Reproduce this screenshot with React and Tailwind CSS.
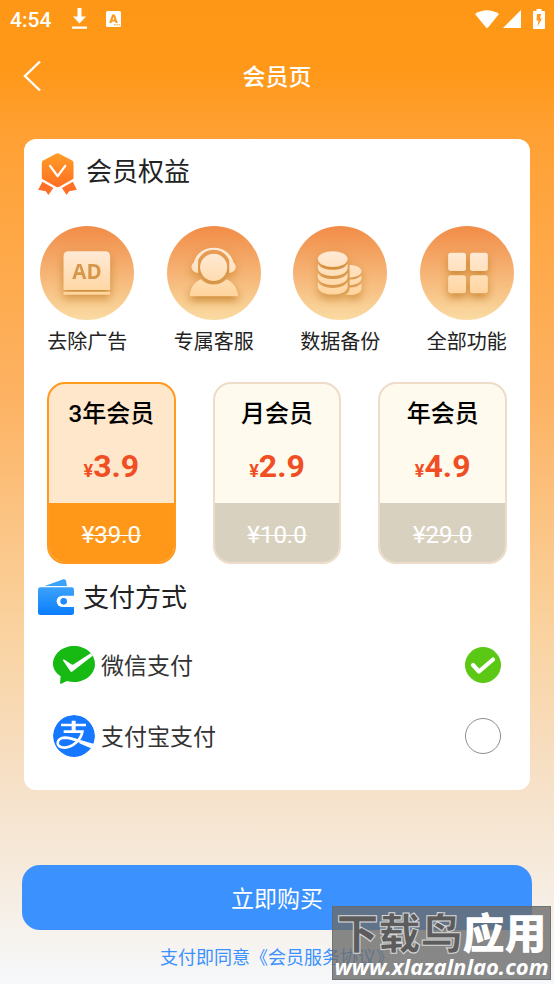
import { useState } from "react";

const plans = [
  { id: "three", name: "3年会员", price: "3.9", old: "¥39.0" },
  { id: "month", name: "月会员", price: "2.9", old: "¥10.0" },
  { id: "year", name: "年会员", price: "4.9", old: "¥29.0" },
];

function StatusBar() {
  return (
    <div className="flex h-[37px] items-center pr-[9px] pl-[10px] text-white">
      <span className="pt-[2px] text-[21px] leading-[24px] font-medium">4:54</span>
      <svg className="ml-[21px] h-[21px] w-[15px]" viewBox="0 0 15 21" fill="currentColor" aria-hidden="true">
        <path d="M5.5 0h4v8.5h4.5L7.5 15.500 1 8.500h4.500zM0 18.500h15v2.200H0z" />
      </svg>
      <svg className="ml-[19px] h-4 w-[15px]" viewBox="0 0 15 16" aria-hidden="true">
        <rect width="15" height="16" rx="1.500" fill="#fff" />
        <path d="M6.200 3.500h2.600l3 8.500H9.600l-.5-1.600H5.900L5.400 12H3.200zM7.500 6l-.9 2.800h1.800z" fill="#ff9818" fillRule="evenodd" />
        <path d="M8 13.300h1.500v1H8zM10.300 13.300h1.500v1h-1.500zM12.600 13.300h1.200v1h-1.200z" fill="#ff9818" />
      </svg>
      <span className="flex-1" />
      <svg className="h-[18px] w-6" viewBox="0 0 24 18" fill="currentColor" aria-hidden="true">
        <path d="M0 4Q12-3.500 24 4L13 17.500q-1 1-2 0z" />
      </svg>
      <svg className="ml-1 h-[18px] w-[18px]" viewBox="0 0 18 18" fill="currentColor" aria-hidden="true">
        <path d="M18 0v18H0z" />
      </svg>
      <svg className="ml-3 h-5 w-3" viewBox="0 0 12 20" aria-hidden="true">
        <path d="M3.500 0h5v2H11q1 0 1 1v16q0 1-1 1H1q-1 0-1-1V3q0-1 1-1h2.500z" fill="#fff" />
        <path d="M4 5h4L7 9.500h2L4.500 17.500 5.500 11.500H3.500z" fill="#ff9818" />
      </svg>
    </div>
  );
}

function Medal() {
  return (
    <svg className="h-[42px] w-[39px]" viewBox="54 69 117 127" aria-hidden="true">
      <defs>
        <linearGradient id="medal" x1="0" y1="0" x2="0" y2="1">
          <stop offset="0" stopColor="#ff9d28" />
          <stop offset="1" stopColor="#ff6f22" />
        </linearGradient>
      </defs>
      <path d="M108 71q5-3 10 0l39 21q4 2 4 7v43q0 5-4 7l-39 22q-5 3-10 0l-39-22q-4-2-4-7V99q0-5 4-7z" fill="url(#medal)" />
      <path d="M67 156l33 19-15 21-8-11-23-5zM159 156l-33 19 14 21 8-11 23-5z" fill="#ff7026" />
      <path d="M90 108l23 31 23-31" fill="none" stroke="#fff" strokeWidth="7" strokeLinecap="round" strokeLinejoin="round" />
    </svg>
  );
}

function Badge({ children }) {
  return (
    <svg className="h-[94px] w-[94px]" viewBox="0 0 284 284" aria-hidden="true">
      <defs>
        <linearGradient id="disc" x1="0" y1="0" x2="0" y2="1">
          <stop offset="0" stopColor="#f18c47" />
          <stop offset="1" stopColor="#fadba2" />
        </linearGradient>
        <linearGradient id="cream" gradientUnits="userSpaceOnUse" x1="0" y1="70" x2="0" y2="212">
          <stop offset="0" stopColor="#ffebd9" />
          <stop offset="1" stopColor="#ffd49c" />
        </linearGradient>
        <filter id="glow" x="-50%" y="-50%" width="200%" height="200%" colorInterpolationFilters="sRGB">
          <feDropShadow dx="0" dy="12" stdDeviation="13" floodColor="#cb8833" floodOpacity="1" />
        </filter>
      </defs>
      <circle cx="142" cy="142" r="142" fill="url(#disc)" />
      <g fill="url(#cream)" filter="url(#glow)">{children}</g>
    </svg>
  );
}

const benefits = [
  {
    name: "去除广告",
    art: (
      <>
        <path d="M71 193V92q0-16 16-16h109q16 0 16 16v101zM71 199h141v9H71z" />
        <text
          x="142"
          y="159"
          textAnchor="middle"
          fontSize="62"
          fill="#d6974a"
          className="font-['Open_Sans',sans-serif] font-bold"
        >
          AD
        </text>
      </>
    ),
  },
  {
    name: "专属客服",
    art: (
      <>
        <circle cx="141" cy="125" r="41" />
        <path d="M68 212c2-24 14-42 34-51 22 21 56 21 78 0 20 9 33 27 35 51z" />
        <path d="M94 103v39c-12-1-20-9-20-18 0-6 3-11 7-14 7-27 31-44 60-44s53 17 60 44c4 3 7 8 7 14 0 9-8 17-20 18v-39c-9-19-26-31-47-31s-38 12-47 31z" />
      </>
    ),
  },
  {
    name: "数据备份",
    art: (
      <>
        <ellipse cx="120" cy="100" rx="45" ry="24" />
        <path d="M75 113c11 26 79 26 90 0v15c-3 31-87 31-90 0zM75 141c11 26 79 26 90 0v14c-3 31-87 31-90 0zM75 168c11 26 79 26 90 0v16c-3 31-87 31-90 0z" />
        <path d="M171 118c20 0 36 8 36 19s-16 19-36 19zM171 162c15 0 29-5 36-13v10c-2 13-18 18-36 20zM171 186c15 0 29-5 36-13v17c-2 16-30 21-49 17 8-4 13-9 13-21z" />
      </>
    ),
  },
  {
    name: "全部功能",
    art: (
      <>
        <rect x="85" y="81" width="54" height="55" rx="8" />
        <rect x="151" y="81" width="54" height="55" rx="8" />
        <rect x="85" y="149" width="54" height="54" rx="8" />
        <rect x="151" y="149" width="54" height="54" rx="8" />
      </>
    ),
  },
];

function Wallet() {
  return (
    <svg className="h-9 w-9" viewBox="0 0 108 108" aria-hidden="true">
      <defs>
        <linearGradient id="wallet" x1="0" y1="0" x2="0" y2="1">
          <stop offset="0" stopColor="#3ba2fa" />
          <stop offset="1" stopColor="#0b7dff" />
        </linearGradient>
      </defs>
      <path d="M20 21L76 1q6-2 8 4l3 16z" fill="#3ba2fa" />
      <rect y="25" width="108" height="83" rx="7" fill="url(#wallet)" />
      <path d="M108 50H73a17 17 0 0 0 0 34h35z" fill="#fff" />
      <circle cx="77" cy="67" r="10" fill="#1f8cfd" />
    </svg>
  );
}

function WechatPay() {
  return (
    <svg className="h-[38px] w-[42px]" viewBox="0 0 126 114" aria-hidden="true">
      <path d="M63 0c35 0 63 24 63 54s-28 54-63 54c-8 0-15-1-21-3l-18 8q-4 2-3-3l2-19C9 81 0 69 0 54 0 24 28 0 63 0z" fill="#16ba13" />
      <path d="M29 42q3-3 7 0l19 13q3 2 7 0l51-33 6 7-60 47q-5 4-8-2z" fill="#fff" />
    </svg>
  );
}

function Alipay() {
  return (
    <svg className="h-[42px] w-[42px]" viewBox="0 0 126 126" aria-hidden="true">
      <defs>
        <clipPath id="coin">
          <circle cx="63" cy="63" r="63" />
        </clipPath>
      </defs>
      <g clipPath="url(#coin)">
        <circle cx="63" cy="63" r="63" fill="#1677ff" />
        <path
          d="M24 30H99M32 50H88C84 74 60 97 34 98 6 98 8 69 36 68 56 68 76 78 96 85"
          fill="none"
          stroke="#fff"
          strokeWidth="8"
        />
        <path d="M56 17h12v33H56z" fill="#fff" />
        <path d="M84 76l42 12-7 14-40-17z" fill="#fff" />
      </g>
    </svg>
  );
}

function PayOption({ id, label, icon, checked, onChange }) {
  return (
    <label htmlFor={id} className="flex h-[42px] cursor-pointer items-center">
      <span className="w-[42px]">{icon}</span>
      <span className="ml-[6px] flex-1 pt-1 text-[23px] leading-[34px] text-[#333333]">{label}</span>
      <span className="grid h-9 w-9 place-items-center">
        <input
          id={id}
          type="radio"
          name="payment"
          checked={checked}
          onChange={onChange}
          className="col-start-1 row-start-1 h-9 w-9 appearance-none rounded-full border border-[#8c8c8c] bg-white checked:border-[#5ac815] checked:bg-[#5ac815]"
        />
        {checked && (
          <svg className="pointer-events-none col-start-1 row-start-1 h-9 w-9" viewBox="0 0 36 36" fill="none" aria-hidden="true">
            <path d="M8 18l6 6.500L28 12.500" stroke="#fff" strokeWidth="4.200" strokeLinecap="round" strokeLinejoin="round" />
          </svg>
        )}
      </span>
    </label>
  );
}

export default function App() {
  const [plan, setPlan] = useState("three");
  const [pay, setPay] = useState("wechat");

  return (
    <div className="relative min-h-screen bg-[linear-gradient(180deg,#ff9716_0%,#ff9818_7%,#ffa032_13%,#fdb262_40%,#fad09a_62%,#f6e2cb_81%,#f6eadb_88%,#f6f8fb_100%)] pb-[14px] font-['Roboto','Noto_Sans_CJK_SC',sans-serif]">
      <StatusBar />
      <header className="grid h-[78px] grid-cols-[64px_1fr_64px] items-center text-white">
        <button type="button" aria-label="返回" className="flex h-12 items-center pl-[23px]">
          <svg className="h-8 w-[18px]" viewBox="0 0 18 32" fill="none" aria-hidden="true">
            <path d="M17 1.500L2 16l15 14.500" stroke="currentColor" strokeWidth="2.400" />
          </svg>
        </button>
        <h1 className="pt-1 text-center text-[23px] leading-[34px] font-medium">会员页</h1>
      </header>

      <main className="mx-6 mt-6 rounded-xl bg-white pt-[14px] pb-[33px]">
        <div className="flex items-start gap-[9px] pl-[14px]">
          <Medal />
          <h2 className="text-[26px] leading-[38px] text-[#222222]">会员权益</h2>
        </div>

        <ul className="mt-[31px] grid grid-cols-4">
          {benefits.map((b) => (
            <li key={b.name} className="flex flex-col items-center gap-[6px]">
              <Badge>{b.art}</Badge>
              <span className="text-[20px] leading-[32px] text-[#222222]">{b.name}</span>
            </li>
          ))}
        </ul>

        <div className="mt-6 grid grid-cols-3 gap-[37px] px-[23px]">
          {plans.map((p) => {
            const on = p.id === plan;
            return (
              <button
                key={p.id}
                type="button"
                aria-pressed={on}
                onClick={() => setPlan(p.id)}
                className={`flex h-[182px] flex-col overflow-hidden rounded-[18px] border-2 ${
                  on ? "border-[#ff9a1e] bg-[#ffe7cc]" : "border-[#ecdcc8] bg-[#fffaee]"
                }`}
              >
                <span className="mt-[13px] w-full text-center text-[24px] leading-[34px] font-medium text-black">{p.name}</span>
                <span className="mt-[15px] w-full text-center text-[32px] leading-[40px] font-bold text-[#f04e23]">
                  <span className="text-[18px]">¥</span>
                  {p.price}
                </span>
                <span
                  className={`mt-auto flex h-[59px] w-full items-center justify-center pt-1 text-[24px] text-white ${
                    on ? "bg-[#ff9818]" : "bg-[#d9d1c0]"
                  }`}
                >
                  <s className="decoration-1">{p.old}</s>
                </span>
              </button>
            );
          })}
        </div>

        <div className="mt-[15px] flex h-9 items-start gap-[9px] pl-[14px]">
          <Wallet />
          <h2 className="text-[26px] leading-[38px] text-[#222222]">支付方式</h2>
        </div>

        <div role="radiogroup" aria-label="支付方式" className="mt-[29px] flex flex-col gap-[29px] px-[29px]">
          <PayOption id="wechat" label="微信支付" icon={<WechatPay />} checked={pay === "wechat"} onChange={() => setPay("wechat")} />
          <PayOption id="alipay" label="支付宝支付" icon={<Alipay />} checked={pay === "alipay"} onChange={() => setPay("alipay")} />
        </div>
      </main>

      <div className="mt-[75px] px-[22px]">
        <button type="button" className="h-[65px] w-full rounded-[18px] bg-[#3b92fe] pt-1 text-[23px] leading-[34px] text-white">
          立即购买
        </button>
      </div>
      <p className="mt-4 text-center text-[18px] leading-[24px] text-[#3b92fe]">
        <a href="#agreement">支付即同意《会员服务协议》</a>
      </p>

      <div className="pointer-events-none absolute right-[3px] bottom-1 flex h-[74px] w-[219px] flex-col items-center justify-end border border-[#666666]/60 bg-[#6b6b6b]/80 text-white">
        <p className="text-[42px] leading-[36px] font-black whitespace-nowrap">
          <span className="text-[#5c5c5c] [-webkit-text-stroke:1px_#d8d8d8]">下载鸟</span>
          <span>应用</span>
        </p>
        <p className="font-['Noto_Sans',sans-serif] text-[22px] leading-[26px] font-bold whitespace-nowrap italic">www.xlazalnlao.com</p>
      </div>
    </div>
  );
}
